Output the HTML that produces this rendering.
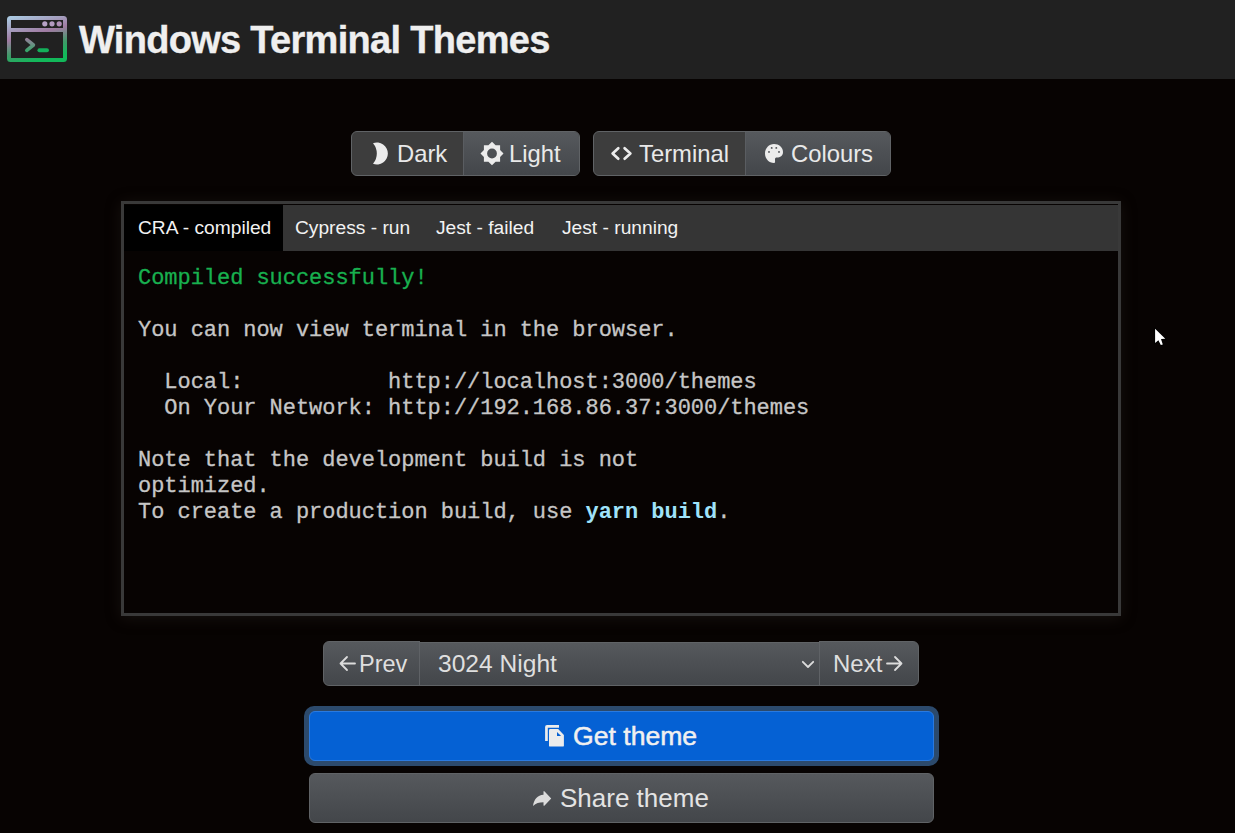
<!DOCTYPE html>
<html><head><meta charset="utf-8">
<style>
*{box-sizing:border-box;margin:0;padding:0}
html,body{width:1235px;height:833px;overflow:hidden;background:#070302;font-family:"Liberation Sans",sans-serif;color:#dee2e6}
.a{position:absolute}
.hdr{left:0;top:0;width:1235px;height:79px;background:#212121}
.title{left:79px;top:18px;font-size:38px;letter-spacing:-0.7px;-webkit-text-stroke:0.35px #efefef;font-weight:bold;color:#efefef;white-space:nowrap;line-height:44px}
.bx{border:1px solid #606366;border-radius:6px}
.act{background:#3d3d3d}
.grad{background:linear-gradient(#56595d,#43464a)}
.txt{white-space:nowrap;line-height:30px;color:#e9e9e9}
.term{left:121px;top:201px;width:1000px;height:415px;border:3px solid #393939;background:#070302;box-shadow:0 2px 14px rgba(45,40,36,.4)}
.tabs{left:0;top:1px;width:994px;height:46px;background:#353535}
.tab{top:0;height:46px;font-size:19.2px;color:#f2f2f2;line-height:46px;white-space:nowrap}
.on{background:#000}
.tt{left:14px;top:62px;-webkit-text-stroke:0.3px currentColor;font-family:"Liberation Mono",monospace;font-size:22px;letter-spacing:-0.04px;line-height:26px;color:#c6c6c6;white-space:pre}
.g{color:#18b04f}
.c{color:#9fe3fa;font-weight:bold;-webkit-text-stroke:0}
svg{position:absolute;overflow:visible}
</style></head><body>
<div class="a hdr">
  <svg style="left:7px;top:16px" width="60" height="47" viewBox="0 0 60 47">
    <defs><linearGradient id="lg" gradientUnits="userSpaceOnUse" x1="10" y1="0" x2="22" y2="47">
      <stop offset="0" stop-color="#aac8e0"/><stop offset="0.45" stop-color="#a07ba2"/><stop offset="0.75" stop-color="#3f9a68"/><stop offset="1" stop-color="#12b85a"/></linearGradient><linearGradient id="lg2" gradientUnits="userSpaceOnUse" x1="0" y1="22" x2="0" y2="36"><stop offset="0" stop-color="#9c7c9e"/><stop offset="1" stop-color="#2fa865"/></linearGradient></defs>
    <rect x="2" y="2" width="56" height="42" rx="1.5" fill="none" stroke="url(#lg)" stroke-width="4"/>
    <rect x="2" y="12" width="56" height="4" fill="url(#lg)"/>
    <circle cx="37.8" cy="7.8" r="2.6" fill="#b7a2c6"/>
    <circle cx="45" cy="7.8" r="2.6" fill="#b49ac0"/>
    <circle cx="52.2" cy="7.8" r="2.6" fill="#b08fb8"/>
    <path d="M19.8 23.6 L26.4 29 L19.8 34.4" fill="none" stroke="url(#lg2)" stroke-width="3.6" stroke-linecap="round" stroke-linejoin="round"/>
    <path d="M32.4 34.3 H40" fill="none" stroke="#13b05a" stroke-width="3.9" stroke-linecap="round"/>
  </svg>
  <div class="a title">Windows Terminal Themes</div>
</div>

<!-- group 1 -->
<div class="a bx act" style="left:351px;top:131px;width:229px;height:45px;overflow:hidden">
  <div class="a grad" style="left:111px;top:0;width:117px;height:43px;border-left:1px solid #5a5d61"></div>
</div>
<svg style="left:372px;top:143px" width="16" height="21" viewBox="0 0 16 21">
  <path d="M1 0.2 A11 11 0 1 1 1 20.8 A15.8 15.8 0 0 0 1 0.2 Z" fill="#ececec"/>
</svg>
<div class="a txt" style="left:397px;top:139px;font-size:23.8px">Dark</div>
<svg style="left:480px;top:141px" width="24" height="25" viewBox="-12 -12.5 24 25">
  <path fill-rule="evenodd" fill="#ececec" d="M0 -11.8 L3.6 -8.2 L8.1 -8.2 L8.1 -3.6 L11.5 0 L8.1 3.6 L8.1 8.2 L3.6 8.2 L0 11.8 L-3.6 8.2 L-8.1 8.2 L-8.1 3.6 L-11.5 0 L-8.1 -3.6 L-8.1 -8.2 L-3.6 -8.2 Z M0 -4.9 A4.9 4.9 0 1 0 0 4.9 A4.9 4.9 0 1 0 0 -4.9 Z"/>
</svg>
<div class="a txt" style="left:509px;top:139px;font-size:23.8px">Light</div>

<!-- group 2 -->
<div class="a bx act" style="left:593px;top:131px;width:298px;height:45px;overflow:hidden">
  <div class="a grad" style="left:151px;top:0;width:146px;height:43px;border-left:1px solid #5a5d61"></div>
</div>
<svg style="left:610px;top:146px" width="23" height="15" viewBox="0 0 23 15">
  <path d="M8.3 2.2 L2.6 7.45 L8.3 12.7 M14.6 2.2 L20.4 7.45 L14.6 12.7" fill="none" stroke="#ececec" stroke-width="2.7" stroke-linecap="round" stroke-linejoin="round"/>
</svg>
<div class="a txt" style="left:639px;top:139px;font-size:23.8px">Terminal</div>
<svg style="left:764px;top:143px" width="20" height="21" viewBox="0 0 20 21">
  <path fill-rule="evenodd" fill="#ececec" d="M10 1 C15 1 19 4.5 19 9 C19 13 16 14.5 13 14.5 C11.5 14.5 11 15 11 16.5 C11 18.5 11.5 20 10 20 C5 20 1 15.8 1 10.5 C1 5.2 5 1 10 1 Z M4.05 8.9 a0.95 0.95 0 1 0 1.9 0 a0.95 0.95 0 1 0 -1.9 0 Z M6.75 4.9 a0.95 0.95 0 1 0 1.9 0 a0.95 0.95 0 1 0 -1.9 0 Z M11.350000000000001 4.9 a0.95 0.95 0 1 0 1.9 0 a0.95 0.95 0 1 0 -1.9 0 Z M14.05 8.9 a0.95 0.95 0 1 0 1.9 0 a0.95 0.95 0 1 0 -1.9 0 Z"/>
</svg>
<div class="a txt" style="left:791px;top:139px;font-size:23.8px">Colours</div>

<!-- terminal -->
<div class="a term">
  <div class="a tabs">
    <div class="a tab on" style="left:0;width:159px;padding-left:14px">CRA - compiled</div>
    <div class="a tab" style="left:171px">Cypress - run</div>
    <div class="a tab" style="left:312px">Jest - failed</div>
    <div class="a tab" style="left:438px">Jest - running</div>
  </div>
<div class="a tt"><span class="g">Compiled successfully!</span>

You can now view terminal in the browser.

  Local:           http://localhost:3000/themes
  On Your Network: http://192.168.86.37:3000/themes

Note that the development build is not
optimized.
To create a production build, use <span class="c">yarn build</span>.</div>
</div>

<!-- cursor -->
<svg style="left:1153px;top:327px" width="16" height="21" viewBox="0 0 16 21">
  <path d="M2.1 1.8 V15.9 L5.4 13.2 L7.8 17.9 L9.8 17.6 L8 12.1 L12.3 11.7 Z" fill="#fff" stroke="#000" stroke-width="1.4" stroke-linejoin="miter" paint-order="stroke"/>
</svg>

<!-- prev / select / next -->
<div class="a bx grad" style="left:323px;top:641px;width:596px;height:45px"></div>
<div class="a" style="left:420px;top:641px;width:399px;height:1px;background:#070302"></div>
<div class="a" style="left:420px;top:642px;width:399px;height:1px;background:#606366"></div>
<div class="a" style="left:419px;top:642px;width:1px;height:43px;background:#5f6266"></div>
<div class="a" style="left:819px;top:642px;width:1px;height:43px;background:#5f6266"></div>
<svg style="left:339px;top:655px" width="17" height="17" viewBox="0 0 17 17">
  <path d="M16 8.5 H1.5 M8 2 L1.5 8.5 L8 15" fill="none" stroke="#dcdcdc" stroke-width="1.8" stroke-linecap="round" stroke-linejoin="round"/>
</svg>
<div class="a txt" style="left:359px;top:649px;font-size:23.5px;color:#dfdfdf">Prev</div>
<div class="a txt" style="left:438px;top:649px;font-size:24.6px;color:#dfdfdf">3024 Night</div>
<svg style="left:801px;top:660px" width="14" height="9" viewBox="0 0 14 9">
  <path d="M1.8 1.8 L7 7 L12.2 1.8" fill="none" stroke="#dcdcdc" stroke-width="1.8" stroke-linecap="round" stroke-linejoin="round"/>
</svg>
<div class="a txt" style="left:833px;top:649px;font-size:24px;color:#dfdfdf">Next</div>
<svg style="left:886px;top:655px" width="17" height="17" viewBox="0 0 17 17">
  <path d="M1 8.5 H15.5 M9 2 L15.5 8.5 L9 15" fill="none" stroke="#dcdcdc" stroke-width="1.8" stroke-linecap="round" stroke-linejoin="round"/>
</svg>

<!-- get theme -->
<div class="a" style="left:304px;top:706px;width:635px;height:60px;border-radius:10px;background:#2c4a6c"></div>
<div class="a" style="left:309px;top:711px;width:625px;height:50px;border-radius:6px;background:#0561d4;border:1px solid #2a7ae0"></div>
<svg style="left:544px;top:724px" width="21" height="24" viewBox="0 0 21 24">
  <path fill="#ececec" d="M1.1 3 Q1.1 1.1 3 1.1 H15 V3.8 H3.8 V16.9 H1.1 Z"/>
  <path fill="#ececec" d="M5 6.2 Q5 5 6.2 5 H14.2 L19.9 11 V21.4 Q19.9 22.6 18.7 22.6 H6.2 Q5 22.6 5 21.4 Z"/>
  <path fill="#0561d4" d="M13 7.9 V12 H17.1 Z"/>
</svg>
<div class="a txt" style="left:573px;top:721px;font-size:26.6px;color:#f0f0f0;-webkit-text-stroke:0.5px #f0f0f0">Get theme</div>

<!-- share theme -->
<div class="a bx grad" style="left:309px;top:773px;width:625px;height:50px"></div>
<svg style="left:532px;top:790px" width="20" height="17" viewBox="0 0 20 17">
  <path fill="#dcdcdc" d="M19.2 8.5 L12.6 1.4 Q11.5 0.6 11.5 2 V4.8 C5.5 5 2 9.5 1 15.9 C4 13 7 12.2 11.5 12.2 V14.9 Q11.5 16.2 12.6 15.5 Z"/>
</svg>
<div class="a txt" style="left:560px;top:783px;font-size:26px;color:#e3e3e3">Share theme</div>

</body></html>
